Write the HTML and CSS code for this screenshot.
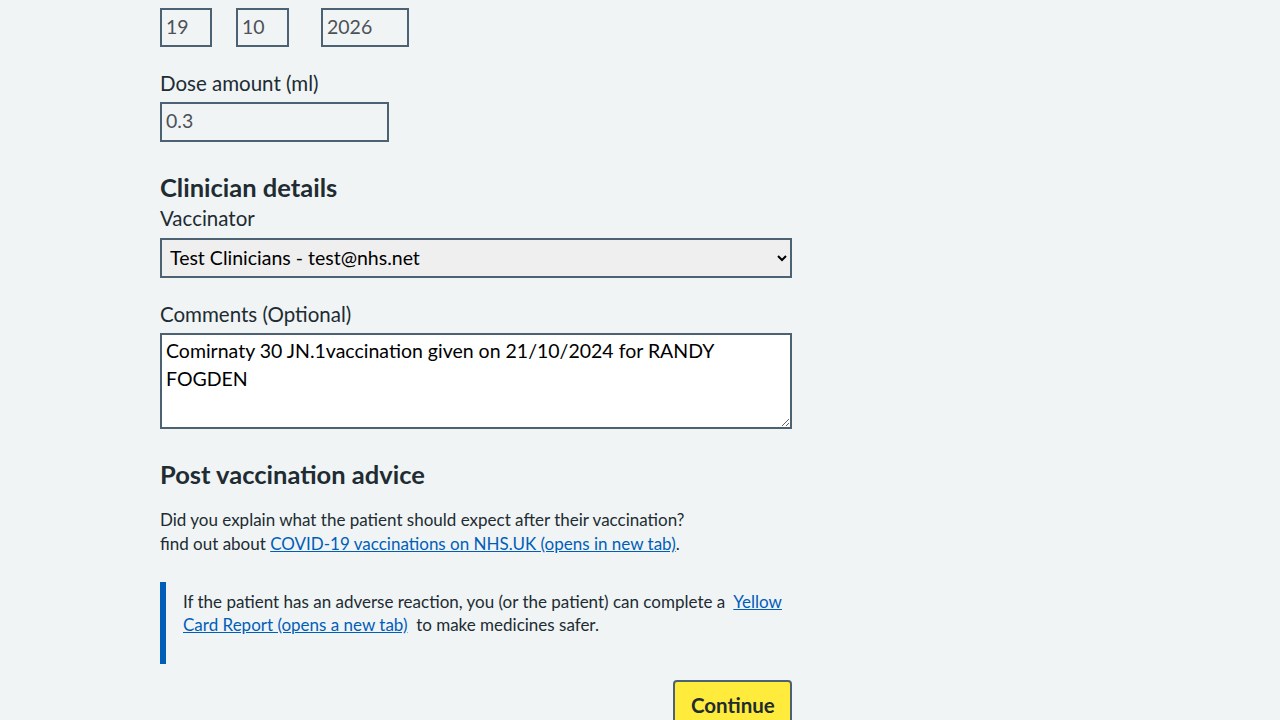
FILE: index.html
```html
<!DOCTYPE html>
<html lang="en">
<head>
<meta charset="utf-8">
<title>Record vaccination</title>
<link rel="stylesheet" href="styles.css">
</head>
<body>
<main class="page">
  <div class="date-row">
    <input class="input input-day" type="text" value="19">
    <input class="input input-month" type="text" value="10">
    <input class="input input-year" type="text" value="2026">
  </div>

  <div class="form-group dose">
    <label class="label">Dose amount (ml)</label>
    <input class="input input-dose" type="text" value="0.3">
  </div>

  <h2 class="heading">Clinician details</h2>
  <div class="form-group vaccinator">
    <label class="label">Vaccinator</label>
    <select class="select">
      <option>Test Clinicians - test@nhs.net</option>
    </select>
  </div>

  <div class="form-group comments">
    <label class="label">Comments (Optional)</label>
    <textarea class="textarea">Comirnaty 30 JN.1vaccination given on 21/10/2024 for RANDY FOGDEN</textarea>
  </div>

  <h2 class="heading heading-advice">Post vaccination advice</h2>
  <p class="body-text">Did you explain what the patient should expect after their vaccination?<br>find out about <a class="link" href="#">COVID-19 vaccinations on NHS.UK (opens in new tab)</a>.</p>

  <div class="inset">
    <p class="inset-text">If the patient has an adverse reaction, you (or the patient) can complete a &nbsp;<a class="link" href="#">Yellow Card Report (opens a new tab)</a>&nbsp; to make medicines safer.</p>
  </div>

  <div class="actions">
    <button class="button" type="button">Continue</button>
  </div>
</main>
</body>
</html>
```
FILE: styles.css
```css
html, body {
  margin: 0;
  padding: 0;
  background: #f0f4f5;
}
body {
  font-family: "Lato", "Noto Sans", sans-serif;
  color: #212b32;
}
.page {
  width: 632px;
  margin-left: 160px;
  padding-top: 8px;
}
.date-row {
  display: flex;
}
.input {
  box-sizing: border-box;
  height: 39px;
  border: 2px solid #4c6272;
  background: #f0f4f5;
  font-family: inherit;
  font-size: 19.5px;
  color: #4d5157;
  padding: 0 4px 3px;
  margin: 0;
  border-radius: 0;
}
.input-day { width: 52px; margin-right: 24px; }
.input-month { width: 53px; margin-right: 32px; }
.input-year { width: 88px; }
.form-group {
  display: flex;
  flex-direction: column;
  align-items: flex-start;
}
.dose { margin-top: 22px; }
.label {
  font-size: 20.5px;
  line-height: 28px;
  margin-bottom: 5px;
}
.input-dose { width: 229px; height: 40px; }
.heading {
  font-size: 25.5px;
  font-weight: 700;
  margin: 30px 0 0;
  line-height: 30px;
}
.vaccinator { margin-top: 2px; }
.vaccinator .label { margin-bottom: 6px; }
.select {
  box-sizing: border-box;
  width: 632px;
  height: 40px;
  border: 2px solid #4c6272;
  background: #efefef;
  font-family: inherit;
  font-size: 19.5px;
  color: #000;
  padding: 0 4px 2px;
  border-radius: 0;
}
.comments { margin-top: 22px; }
.comments .label { margin-bottom: 5px; }
.textarea {
  box-sizing: border-box;
  width: 632px;
  height: 96px;
  border: 2px solid #4c6272;
  background: #fff;
  font-family: inherit;
  font-size: 19.5px;
  line-height: 28px;
  color: #000;
  padding: 2px 20px 2px 4px;
  resize: vertical;
  border-radius: 0;
}
.heading-advice { margin-top: 30px; }
.body-text {
  font-size: 17px;
  line-height: 24px;
  margin: 19px 0 0;
}
.link { color: #005eb8; text-decoration: underline; }
.inset {
  margin-top: 26px;
  border-left: 6px solid #005eb8;
  padding: 8px 6px 28px 17px;
}
.inset-text {
  margin: 0;
  font-size: 17px;
  line-height: 23px;
}
.actions {
  display: flex;
  justify-content: flex-end;
  margin-top: 16px;
}
.button {
  background: #ffeb3b;
  border: 2px solid #4c6272;
  border-radius: 4px;
  font-family: inherit;
  font-size: 20.5px;
  font-weight: 700;
  color: #212b32;
  padding: 11px 16px;
  width: 119px;
}
```
